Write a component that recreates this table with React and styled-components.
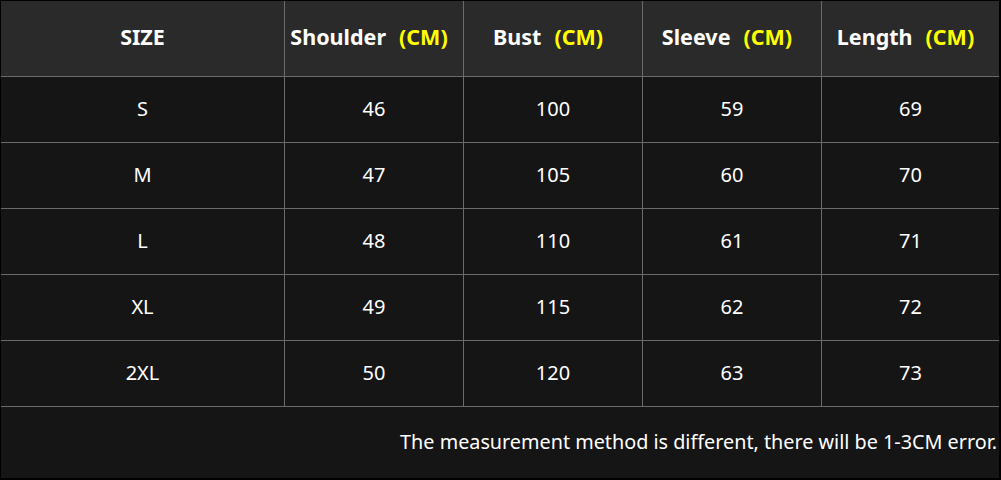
import React from "react";
import styled, { createGlobalStyle } from "styled-components";

const Global = createGlobalStyle`
  html, body { margin: 0; padding: 0; background: #000; }
  body { font-family: "Noto Sans", "Open Sans", sans-serif; }
`;

const Frame = styled.div`
  width: 1001px;
  height: 480px;
  box-sizing: border-box;
  padding: 1px 2px 2px 1px;
  background: #000;
`;

const Grid = styled.div`
  display: grid;
  grid-template-columns: 283px 178px 178px 178px 1fr;
  grid-template-rows: 75px repeat(5, 65px) 71px;
  gap: 1px;
  background: #6a6a6a;
  height: 100%;
`;

const Cell = styled.div`
  display: flex;
  align-items: center;
  justify-content: center;
  box-sizing: border-box;
  padding-bottom: 3px;
  background: #151515;
  color: #fff;
  font-size: 20px;
  white-space: nowrap;
`;

const HeadCell = styled(Cell)`
  background: #2a2a2a;
  font-size: 21.5px;
  font-weight: 700;
  padding-bottom: 4px;
  padding-right: ${(p) => (p.$unit ? "10px" : "0")};
`;

const Unit = styled.span`
  color: #ffff00;
  margin-left: 13px;
`;

const Footer = styled.div`
  grid-column: 1 / -1;
  background: #151515;
  color: #fff;
  font-size: 19.8px;
  display: flex;
  align-items: center;
  justify-content: flex-end;
  padding-right: 2px;
  padding-bottom: 2px;
  white-space: nowrap;
`;

const heads = ["Shoulder", "Bust", "Sleeve", "Length"];
const rows = [
  ["S", 46, 100, 59, 69],
  ["M", 47, 105, 60, 70],
  ["L", 48, 110, 61, 71],
  ["XL", 49, 115, 62, 72],
  ["2XL", 50, 120, 63, 73],
];

export default function App() {
  return (
    <>
      <Global />
      <Frame>
        <Grid>
          <HeadCell>SIZE</HeadCell>
          {heads.map((h) => (
            <HeadCell $unit key={h}>
              {h}
              <Unit>(CM)</Unit>
            </HeadCell>
          ))}
          {rows.map((r) =>
            r.map((v, i) => <Cell key={r[0] + i}>{v}</Cell>)
          )}
          <Footer>The measurement method is different, there will be 1-3CM error.</Footer>
        </Grid>
      </Frame>
    </>
  );
}
